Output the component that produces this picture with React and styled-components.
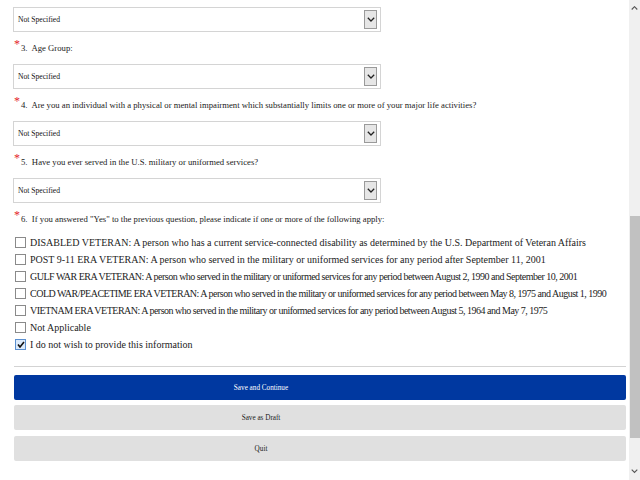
import styled, { createGlobalStyle } from "styled-components";

const GlobalStyle = createGlobalStyle`
  html, body {
    margin: 0;
    padding: 0;
    background: #fff;
    overflow: hidden;
  }
  body {
    font-family: "Liberation Serif", "Times New Roman", serif;
    color: #222;
  }
`;

const Page = styled.div`
  display: flex;
  width: 640px;
  height: 480px;
  overflow: hidden;
`;

const Content = styled.div`
  flex: 1;
  padding: 7px 3px 0 14px;
  display: flex;
  flex-direction: column;
`;

const Select = styled.div`
  width: 359px;
  height: 23px;
  margin-left: -1px;
  border: 1px solid #d4d4d4;
  display: flex;
  align-items: center;
  justify-content: space-between;
  padding: 0 3px 0 4px;
  box-sizing: content-box;
  font-size: 7.6px;
  color: #111;
`;

const Arrow = styled.span`
  width: 11px;
  height: 17px;
  border: 1px solid #9a9a9a;
  background: #e6e6e6;
  display: flex;
  align-items: center;
  justify-content: center;
`;

const Label = styled.div`
  margin: 8px 0;
  height: 16px;
  line-height: 16px;
  font-size: 8.7px;
  color: #222;
  white-space: nowrap;
`;

const Req = styled.span`
  color: #e4262c;
  font-size: 12px;
  line-height: 0;
  position: relative;
  top: -3px;
  margin-right: 1px;
`;

const Options = styled.div`
  margin-top: -1px;
  display: flex;
  flex-direction: column;
`;

const Option = styled.label`
  height: 17px;
  display: flex;
  align-items: center;
  gap: 4px;
  font-size: 10px;
  letter-spacing: ${(p) => (p.$tight ? "-0.5px" : "0")};
  white-space: nowrap;
  padding-left: 1px;
`;

const Box = styled.span`
  width: 9px;
  height: 9px;
  border: 1px solid ${(p) => (p.$checked ? "#5a8fd0" : "#8a8a8a")};
  background: ${(p) => (p.$checked ? "#dbeafb" : "#fff")};
  display: flex;
  align-items: center;
  justify-content: center;
  flex-shrink: 0;
`;

const Divider = styled.hr`
  border: none;
  border-top: 1px solid #d3d3d3;
  margin: 13px 0 8px;
  width: 612px;
`;

const Button = styled.button`
  width: 612px;
  height: 25px;
  margin-bottom: ${(p) => p.$mb || 5}px;
  border: none;
  border-radius: 2px;
  background: ${(p) => (p.$primary ? "#0038a0" : "#e0e0e0")};
  color: ${(p) => (p.$primary ? "#fff" : "#222")};
  font-family: "Liberation Serif", "Times New Roman", serif;
  font-size: 7.2px;
  padding: 0 118px 0 0;
`;

const Scrollbar = styled.div`
  width: 11px;
  background: #f0f0f0;
  display: flex;
  flex-direction: column;
`;

const ScrollArrow = styled.div`
  height: 17px;
  display: flex;
  align-items: center;
  justify-content: center;
`;

const Track = styled.div`
  flex: 1;
  display: flex;
  flex-direction: column;
`;

const Thumb = styled.div`
  margin-top: 199px;
  height: 222px;
  margin-left: 1px;
  background: #c1c1c1;
`;

const Chevron = ({ up, size = 7, color = "#222" }) => (
  <svg width={size} height={size * 0.6} viewBox="0 0 10 6">
    <path
      d={up ? "M1 5 L5 1 L9 5" : "M1 1 L5 5 L9 1"}
      fill="none"
      stroke={color}
      strokeWidth="1.6"
    />
  </svg>
);

const Dropdown = () => (
  <Select>
    <span>Not Specified</span>
    <Arrow>
      <Chevron size={8} />
    </Arrow>
  </Select>
);

const Check = () => (
  <svg width="8" height="7" viewBox="0 0 8 7">
    <path d="M1 3.5 L3 6 L7 1" fill="none" stroke="#111" strokeWidth="1.6" />
  </svg>
);

const veterans = [
  { text: "DISABLED VETERAN: A person who has a current service-connected disability as determined by the U.S. Department of Veteran Affairs" },
  { text: "POST 9-11 ERA VETERAN: A person who served in the military or uniformed services for any period after September 11, 2001" },
  { text: "GULF WAR ERA VETERAN: A person who served in the military or uniformed services for any period between August 2, 1990 and September 10, 2001", tight: true },
  { text: "COLD WAR/PEACETIME ERA VETERAN: A person who served in the military or uniformed services for any period between May 8, 1975 and August 1, 1990", tight: true },
  { text: "VIETNAM ERA VETERAN: A person who served in the military or uniformed services for any period between August 5, 1964 and May 7, 1975", tight: true },
  { text: "Not Applicable" },
  { text: "I do not wish to provide this information", checked: true },
];

const Question = ({ children }) => (
  <Label>
    <Req>*</Req>
    {children}
  </Label>
);

export default function App() {
  return (
    <Page>
      <GlobalStyle />
      <Content>
        <Dropdown />
        <Question>3.&nbsp; Age Group:</Question>
        <Dropdown />
        <Question>
          4.&nbsp; Are you an individual with a physical or mental impairment which
          substantially limits one or more of your major life activities?
        </Question>
        <Dropdown />
        <Question>
          5.&nbsp; Have you ever served in the U.S. military or uniformed services?
        </Question>
        <Dropdown />
        <Question>
          6.&nbsp; If you answered "Yes" to the previous question, please indicate if
          one or more of the following apply:
        </Question>
        <Options>
          {veterans.map((v) => (
            <Option key={v.text} $tight={v.tight}>
              <Box $checked={v.checked}>{v.checked && <Check />}</Box>
              {v.text}
            </Option>
          ))}
        </Options>
        <Divider />
        <Button $primary>Save and Continue</Button>
        <Button $mb={6}>Save as Draft</Button>
        <Button>Quit</Button>
      </Content>
      <Scrollbar>
        <ScrollArrow>
          <Chevron up color="#555" />
        </ScrollArrow>
        <Track>
          <Thumb />
        </Track>
        <ScrollArrow>
          <Chevron color="#555" />
        </ScrollArrow>
      </Scrollbar>
    </Page>
  );
}
